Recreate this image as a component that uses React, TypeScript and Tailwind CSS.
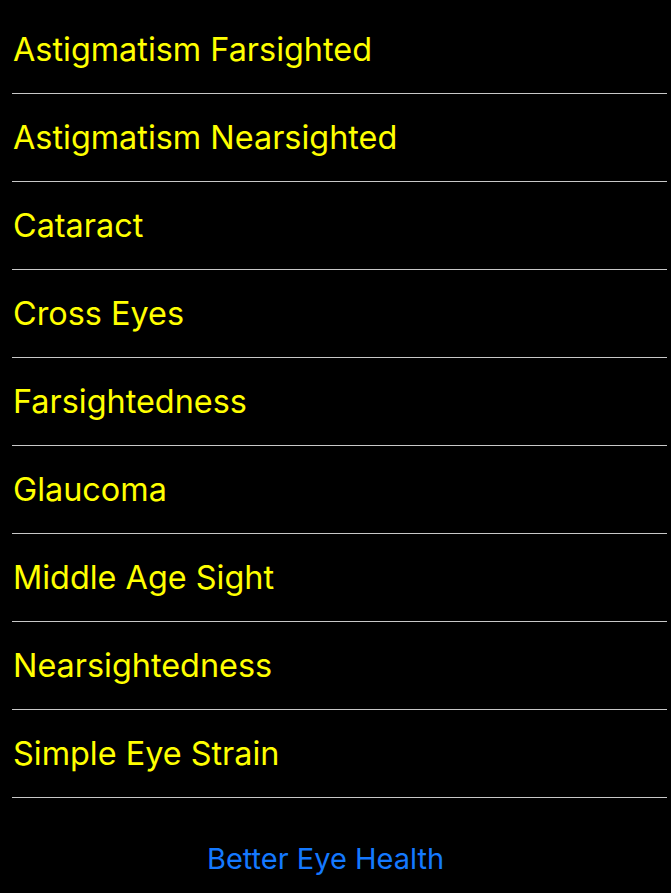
const items = [
  "Astigmatism Farsighted",
  "Astigmatism Nearsighted",
  "Cataract",
  "Cross Eyes",
  "Farsightedness",
  "Glaucoma",
  "Middle Age Sight",
  "Nearsightedness",
  "Simple Eye Strain",
];

export default function App() {
  return (
    <div className="w-[671px] h-[893px] bg-black overflow-hidden" style={{ fontFamily: "Inter, 'Noto Sans', sans-serif" }}>
      <div className="pt-[6px] pl-[12px] pr-[4px]">
        {items.map((t) => (
          <div key={t} className="h-[88px] flex items-center border-b border-[#c8c8c8] pl-[1px] pt-[2px]">
            <span className="text-[32.4px] text-[#ffff00] leading-none">{t}</span>
          </div>
        ))}
      </div>
      <div className="flex justify-center pr-[20px] pt-[46px]">
        <span className="text-[29px] text-[#1479ff] leading-none">Better Eye Health</span>
      </div>
    </div>
  );
}
